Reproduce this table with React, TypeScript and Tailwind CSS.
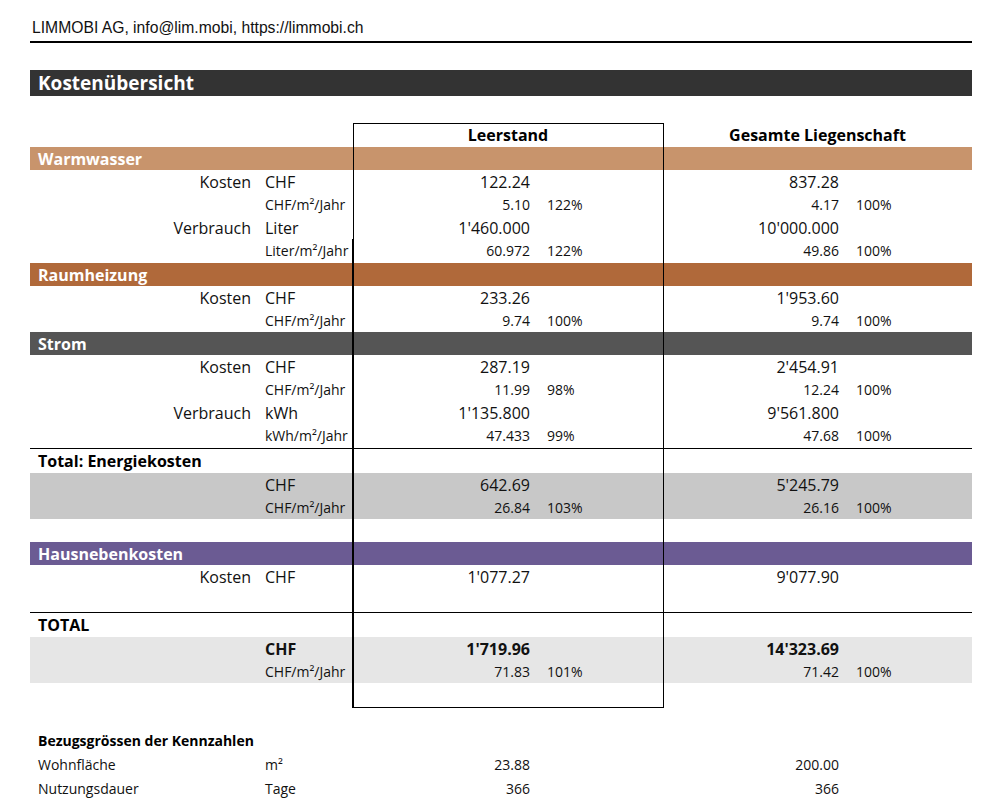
type Line = {
  label?: string;
  unit: string;
  v1: string;
  p1?: string;
  v2: string;
  p2?: string;
  sub?: boolean;
  bold?: boolean;
};

const cols = "grid grid-cols-[228px_95px_177px_133px_176px_133px]";

const Row = ({ label, unit, v1, p1, v2, p2, sub, bold }: Line) => {
  const size = sub ? "text-[14px]" : "text-[16px]";
  return (
    <div className={`${cols} h-[23px] items-center ${bold ? "font-bold" : ""}`}>
      <div className="pr-[7px] text-right text-[16px]">{label}</div>
      <div className={`pl-[7px] whitespace-nowrap ${size}`}>{unit}</div>
      <div className={`text-right ${size}`}>{v1}</div>
      <div className="pl-[17px] text-[14px]">{p1}</div>
      <div className={`text-right ${size}`}>{v2}</div>
      <div className="pl-[17px] text-[14px]">{p2}</div>
    </div>
  );
};

const SectionBar = ({ title, bg }: { title: string; bg: string }) => (
  <div className={`flex h-[23px] items-center pl-2 text-[16px] font-bold text-white ${bg}`}>
    {title}
  </div>
);

const warmwasser: Line[] = [
  { label: "Kosten", unit: "CHF", v1: "122.24", v2: "837.28" },
  { unit: "CHF/m²/Jahr", v1: "5.10", p1: "122%", v2: "4.17", p2: "100%", sub: true },
  { label: "Verbrauch", unit: "Liter", v1: "1'460.000", v2: "10'000.000" },
  { unit: "Liter/m²/Jahr", v1: "60.972", p1: "122%", v2: "49.86", p2: "100%", sub: true },
];

const raumheizung: Line[] = [
  { label: "Kosten", unit: "CHF", v1: "233.26", v2: "1'953.60" },
  { unit: "CHF/m²/Jahr", v1: "9.74", p1: "100%", v2: "9.74", p2: "100%", sub: true },
];

const strom: Line[] = [
  { label: "Kosten", unit: "CHF", v1: "287.19", v2: "2'454.91" },
  { unit: "CHF/m²/Jahr", v1: "11.99", p1: "98%", v2: "12.24", p2: "100%", sub: true },
  { label: "Verbrauch", unit: "kWh", v1: "1'135.800", v2: "9'561.800" },
  { unit: "kWh/m²/Jahr", v1: "47.433", p1: "99%", v2: "47.68", p2: "100%", sub: true },
];

export default function App() {
  return (
    <div className="min-h-[812px] bg-white text-[#111] [font-family:'Open_Sans',sans-serif]">
      <div className="ml-[30px] w-[942px] pt-[18px]">
        <div className="h-[25px] border-b-2 border-black pl-[2px] text-[15.7px] leading-[20px] [font-family:'Liberation_Sans',Arial,sans-serif]">
          LIMMOBI AG, info@lim.mobi, https://limmobi.ch
        </div>

        <div className="mt-[27px] flex h-[26px] items-center bg-[#333333] pl-2 text-[19px] font-bold text-white">
          Kostenübersicht
        </div>

        <div className="relative mt-[27px]">
          <div className={`${cols} h-[24px] items-center text-[16px] font-bold text-black`}>
            <div />
            <div />
            <div className="col-span-2 text-center">Leerstand</div>
            <div className="col-span-2 text-center">Gesamte Liegenschaft</div>
          </div>

          <SectionBar title="Warmwasser" bg="bg-[#c8946c]" />
          {warmwasser.map((l, i) => (
            <Row key={i} {...l} />
          ))}
          <div className="h-px" />

          <SectionBar title="Raumheizung" bg="bg-[#b0693a]" />
          {raumheizung.map((l, i) => (
            <Row key={i} {...l} />
          ))}

          <SectionBar title="Strom" bg="bg-[#555555]" />
          {strom.map((l, i) => (
            <Row key={i} {...l} />
          ))}

          <div className="mt-px flex h-[25px] items-center border-t border-black pl-2 text-[16px] font-bold text-black">
            Total: Energiekosten
          </div>
          <div className="bg-[#c8c8c8]">
            <Row unit="CHF" v1="642.69" v2="5'245.79" />
            <Row unit="CHF/m²/Jahr" v1="26.84" p1="103%" v2="26.16" p2="100%" sub />
          </div>
          <div className="h-[23px]" />

          <SectionBar title="Hausnebenkosten" bg="bg-[#6b5b93]" />
          <Row label="Kosten" unit="CHF" v1="1'077.27" v2="9'077.90" />
          <div className="h-[24px]" />

          <div className="flex h-[25px] items-center border-t border-black pl-2 text-[16px] font-bold text-black">
            TOTAL
          </div>
          <div className="bg-[#e6e6e6]">
            <Row unit="CHF" v1="1'719.96" v2="14'323.69" bold />
            <Row unit="CHF/m²/Jahr" v1="71.83" p1="101%" v2="71.42" p2="100%" sub />
          </div>
          <div className="h-[25px]" />

          <div className="pointer-events-none absolute top-0 bottom-0 left-[323px] w-[311px] border border-black" />
          <div className="pointer-events-none absolute top-[116px] bottom-0 left-[322px] w-px bg-black" />
        </div>

        <div className="mt-[21px] text-[14px]">
          <div className="flex h-[23px] items-center pl-2 font-bold text-black">
            Bezugsgrössen der Kennzahlen
          </div>
          <div className={`${cols} h-[24px] items-center`}>
            <div className="pl-2">Wohnfläche</div>
            <div className="pl-[7px]">m²</div>
            <div className="text-right">23.88</div>
            <div />
            <div className="text-right">200.00</div>
            <div />
          </div>
          <div className={`${cols} h-[24px] items-center`}>
            <div className="pl-2">Nutzungsdauer</div>
            <div className="pl-[7px]">Tage</div>
            <div className="text-right">366</div>
            <div />
            <div className="text-right">366</div>
            <div />
          </div>
        </div>
      </div>
    </div>
  );
}
